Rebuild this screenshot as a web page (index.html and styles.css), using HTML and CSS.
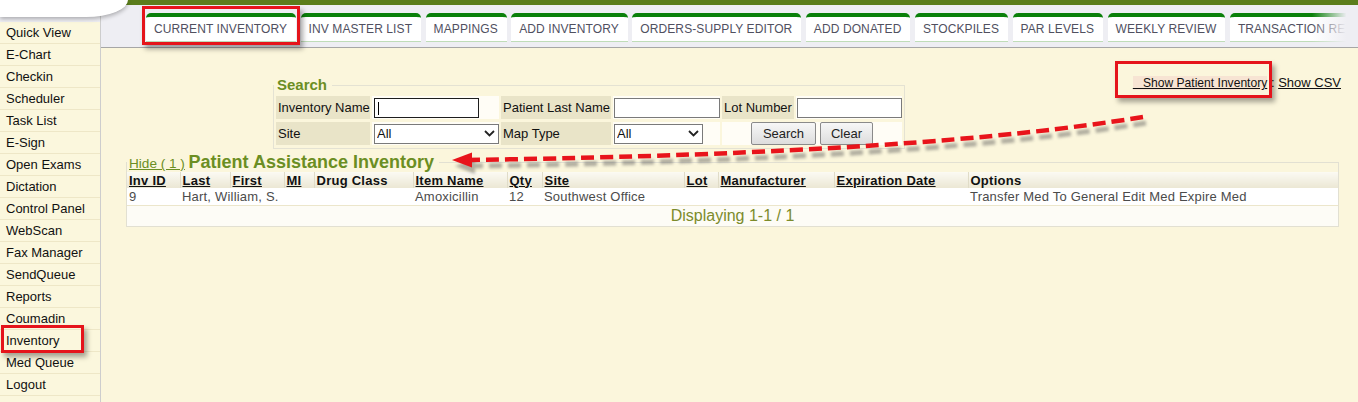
FILE: index.html
```html
<!DOCTYPE html>
<html lang="en">
<head>
<meta charset="utf-8">
<title>Inventory</title>
<link rel="stylesheet" href="styles.css">
</head>
<body>
<div class="page">
  <div class="logo"></div>
  <aside class="sidebar">
    <div class="side-top"></div>
    <nav class="menu">
      <a>Quick View</a>
      <a>E-Chart</a>
      <a>Checkin</a>
      <a>Scheduler</a>
      <a>Task List</a>
      <a>E-Sign</a>
      <a>Open Exams</a>
      <a>Dictation</a>
      <a>Control Panel</a>
      <a>WebScan</a>
      <a>Fax Manager</a>
      <a>SendQueue</a>
      <a>Reports</a>
      <a>Coumadin</a>
      <a>Inventory</a>
      <a>Med Queue</a>
      <a>Logout</a>
      <a>Admin</a>
    </nav>
  </aside>
  <div class="main">
    <header class="topbar">
      <div class="band"></div>
      <nav class="tabs">
        <a class="tab">CURRENT INVENTORY</a>
        <a class="tab">INV MASTER LIST</a>
        <a class="tab">MAPPINGS</a>
        <a class="tab">ADD INVENTORY</a>
        <a class="tab">ORDERS-SUPPLY EDITOR</a>
        <a class="tab">ADD DONATED</a>
        <a class="tab">STOCKPILES</a>
        <a class="tab">PAR LEVELS</a>
        <a class="tab">WEEKLY REVIEW</a>
        <a class="tab">TRANSACTION REPORT</a>
      </nav>
    </header>
    <main class="content">
      <div class="toprow">
        <fieldset class="search">
          <legend>Search</legend>
          <table class="search-table">
            <colgroup>
              <col class="c1"><col class="c2"><col class="c3"><col class="c4"><col class="c5"><col class="c6">
            </colgroup>
            <tr>
              <td class="lbl">Inventory Name</td>
              <td class="fld pad2"><input class="inp inp-focus" type="text"></td>
              <td class="lbl">Patient Last Name</td>
              <td class="fld pad1"><input class="inp inp-wide" type="text"></td>
              <td class="lbl">Lot Number</td>
              <td class="fld pad1"><input class="inp" type="text"></td>
            </tr>
            <tr>
              <td class="lbl">Site</td>
              <td class="fld pad2">
                <span class="sel sel-site">
                  <select><option>All</option></select>
                  <svg viewBox="0 0 11 7"><path d="M1 1 L5.5 5.5 L10 1" fill="none" stroke="#222" stroke-width="1.8"/></svg>
                </span>
              </td>
              <td class="lbl">Map Type</td>
              <td class="fld pad1">
                <span class="sel sel-map">
                  <select><option>All</option></select>
                  <svg viewBox="0 0 11 7"><path d="M1 1 L5.5 5.5 L10 1" fill="none" stroke="#222" stroke-width="1.8"/></svg>
                </span>
              </td>
              <td class="fld" colspan="2">
                <div class="btns">
                  <button class="btn btn-search">Search</button>
                  <button class="btn btn-clear">Clear</button>
                </div>
              </td>
            </tr>
          </table>
        </fieldset>
        <div class="showlinks">
          <a class="show-pi">&nbsp;&nbsp;&nbsp;Show Patient Inventory</a><span class="sep"> : </span><a class="show-csv">Show CSV</a>
        </div>
      </div>

      <fieldset class="section">
        <legend><a class="hide">Hide ( 1 )</a> <span class="title">Patient Assistance Inventory</span></legend>
        <table class="inv">
          <colgroup>
            <col class="w1"><col class="w2"><col class="w3"><col class="w4"><col class="w5"><col class="w6">
            <col class="w7"><col class="w8"><col class="w9"><col class="w10"><col class="w11"><col class="w12">
          </colgroup>
          <thead>
            <tr>
              <th><u>Inv ID</u></th>
              <th><u>Last</u></th>
              <th><u>First</u></th>
              <th><u>MI</u></th>
              <th>Drug Class</th>
              <th><u>Item Name</u></th>
              <th><u>Qty</u></th>
              <th><u>Site</u></th>
              <th><u>Lot</u></th>
              <th><u>Manufacturer</u></th>
              <th><u>Expiration Date</u></th>
              <th>Options</th>
            </tr>
          </thead>
          <tbody>
            <tr class="row">
              <td>9</td>
              <td colspan="2">Hart, William, S.</td>
              <td></td>
              <td></td>
              <td>Amoxicillin</td>
              <td>12</td>
              <td>Southwest Office</td>
              <td></td>
              <td></td>
              <td></td>
              <td>Transfer Med To General Edit Med Expire Med</td>
            </tr>
            <tr class="foot">
              <td colspan="12">Displaying 1-1 / 1</td>
            </tr>
          </tbody>
        </table>
      </fieldset>
    </main>
  </div>

  <div class="mark mark-tab"></div>
  <div class="mark mark-inv"></div>
  <div class="mark mark-show"></div>

  <svg class="arrow" viewBox="0 0 1358 402" width="1358" height="402">
    <defs>
      <filter id="soft" x="-5%" y="-50%" width="110%" height="200%">
        <feGaussianBlur stdDeviation="1.6"/>
      </filter>
    </defs>
    <g filter="url(#soft)" opacity="0.45" transform="translate(3 6)">
      <path d="M1143,117 C1000,140 800,155 470,160" fill="none" stroke="#555" stroke-width="5" stroke-dasharray="13 6"/>
      <path d="M452,160 L472,152 L472,168 Z" fill="#555"/>
    </g>
    <path d="M1143,117 C1000,140 800,155 470,160" fill="none" stroke="#e8141b" stroke-width="4.5" stroke-dasharray="13 6"/>
    <path d="M452,160 L472,152.5 L472,167.5 Z" fill="#e8141b"/>
  </svg>
</div>
</body>
</html>
```

FILE: styles.css
```css
* { box-sizing: border-box; }

html, body {
  margin: 0;
  height: 100%;
}

body {
  font-family: "Liberation Sans", Arial, sans-serif;
  font-size: 13px;
  color: #111;
  background: #fbf6dc;
  overflow: hidden;
}

.page {
  position: relative;
  display: flex;
  width: 1358px;
  height: 402px;
  overflow: hidden;
}

/* logo shape top-left */
.logo {
  position: absolute;
  left: 0;
  top: 0;
  width: 128px;
  height: 17px;
  background: #fff;
  border-bottom-right-radius: 42px 17px;
  box-shadow: 0 2px 4px rgba(0, 0, 0, 0.28);
  z-index: 2;
}

/* sidebar */
.sidebar {
  width: 101px;
  flex: none;
  display: flex;
  flex-direction: column;
  background: #fbf7dd;
  border-right: 1px solid #cdcdcd;
}

.side-top {
  height: 22px;
  flex: none;
  background: #eeeef3;
}

.menu {
  display: flex;
  flex-direction: column;
}

.menu a {
  display: block;
  height: 22px;
  line-height: 22px;
  padding-left: 6px;
  border-bottom: 1px solid #eee7c7;
  color: #111;
  text-decoration: none;
  white-space: nowrap;
}

/* main column */
.main {
  flex: 1;
  display: flex;
  flex-direction: column;
  min-width: 0;
}

.band {
  height: 5px;
  background: #5b7d1b;
}

.tabs {
  position: relative;
  height: 43px;
  display: flex;
  gap: 4.5px;
  padding: 8px 0 0 45px;
  background: #eeeef3;
  border-bottom: 1px solid #a6a6a6;
  overflow: hidden;
}

.tabs::after {
  content: "";
  position: absolute;
  right: 0;
  top: 0;
  bottom: 0;
  width: 46px;
  background: linear-gradient(to right, rgba(238, 238, 243, 0), #eeeef3 75%);
}

.tab {
  flex: none;
  height: 29px;
  padding: 0 9px 0 8px;
  line-height: 24px;
  font-size: 12px;
  letter-spacing: 0.1px;
  color: #50505f;
  background: #fff;
  border-top: 4px solid #0a800a;
  border-bottom: 1px solid #bfdcb8;
  border-radius: 5px 5px 0 0;
  white-space: nowrap;
}

/* content */
.content {
  flex: 1;
  background: #fbf6dc;
  padding: 0 19px 0 25px;
}

.toprow {
  display: flex;
  align-items: flex-start;
  padding-top: 27px;
}

.search {
  margin: 2px 0 0 147px;
  padding: 0;
  border: 1px solid #e4e2d3;
  min-width: 0;
}

.search legend {
  padding: 0 5px 0 3px;
  font-size: 15px;
  line-height: 16px;
  font-weight: bold;
  color: #6b8e23;
}

.search-table {
  border-collapse: separate;
  border-spacing: 2px 3px;
  table-layout: fixed;
  width: 630px;
}

.search-table col.c1 { width: 94px; }
.search-table col.c2 { width: 127px; }
.search-table col.c3 { width: 110px; }
.search-table col.c4 { width: 107px; }
.search-table col.c5 { width: 72px; }
.search-table col.c6 { width: 106px; }

.search-table td {
  height: 23px;
  padding: 0;
  vertical-align: middle;
  white-space: nowrap;
}

.search-table td.lbl {
  background: #e9e4c8;
  padding-left: 2px;
  color: #111;
}

.search-table td.fld {
  background: #fffdf6;
}

.search-table td.pad2 { padding-left: 2px; }
.search-table td.pad1 { padding-left: 1px; }

.inp {
  display: block;
  width: 105px;
  height: 20px;
  margin: 0;
  padding: 0 2px;
  border: 1px solid #7a7a7a;
  border-radius: 0;
  background: #fff;
  font: 13px "Liberation Sans", Arial, sans-serif;
}

.inp-wide { width: 106px; }

.inp-focus {
  border-color: #1e1e1e;
  background: linear-gradient(#000, #000) 3px 3px / 1px 13px no-repeat, #fff;
}

.sel {
  position: relative;
  display: block;
  height: 20px;
}

.sel-site { width: 125px; }
.sel-map { width: 89px; }

.sel select {
  -webkit-appearance: none;
  appearance: none;
  display: block;
  width: 100%;
  height: 20px;
  margin: 0;
  padding: 0 0 0 2px;
  border: 1px solid #7a7a7a;
  border-radius: 0;
  background: #fff;
  color: #111;
  font: 13px "Liberation Sans", Arial, sans-serif;
}

.sel svg {
  position: absolute;
  right: 4px;
  top: 6px;
  width: 11px;
  height: 7px;
  pointer-events: none;
}

.btns {
  display: flex;
  justify-content: center;
  gap: 4px;
}

.btn {
  height: 23px;
  padding: 0;
  border: 1px solid #8a8a8a;
  border-radius: 2px;
  background: linear-gradient(#f7f7f7, #dddddd);
  color: #222;
  font: 13px "Liberation Sans", Arial, sans-serif;
}

.btn-search { width: 65px; }
.btn-clear { width: 53px; }

.showlinks {
  margin-left: auto;
  margin-right: -2px;
  line-height: 16px;
  font-size: 13px;
  white-space: nowrap;
}

.show-pi {
  font-size: 12.1px;
  color: #111;
  text-decoration: underline;
  background: #f7e4d3;
}

.sep {
  color: #111;
}

.show-csv {
  color: #111;
  text-decoration: underline;
}

/* inventory section */
.section {
  margin: 3px 0 0 0;
  padding: 0;
  border: 1px solid #e2e0d2;
  min-width: 0;
}

.section legend {
  height: 20px;
  padding: 0 5px 0 2px;
  line-height: 20px;
  white-space: nowrap;
}

.hide {
  font-size: 13.6px;
  color: #6b8e23;
  text-decoration: underline;
}

.title {
  font-size: 18px;
  font-weight: bold;
  color: #6b8e23;
}

.inv {
  width: 100%;
  border-collapse: collapse;
  table-layout: fixed;
}

.inv col.w1 { width: 53px; }
.inv col.w2 { width: 50px; }
.inv col.w3 { width: 54px; }
.inv col.w4 { width: 30px; }
.inv col.w5 { width: 99px; }
.inv col.w6 { width: 94px; }
.inv col.w7 { width: 35px; }
.inv col.w8 { width: 142px; }
.inv col.w9 { width: 34px; }
.inv col.w10 { width: 116px; }
.inv col.w11 { width: 134px; }
.inv col.w12 { width: auto; }

.inv th {
  height: 16px;
  padding: 0 2px;
  text-align: left;
  font-weight: bold;
  font-size: 13px;
  line-height: 15px;
  letter-spacing: 0.25px;
  color: #111;
  white-space: nowrap;
  overflow: hidden;
  background: linear-gradient(#fbfaf3, #ebe7d4);
  border-left: 1px solid #e0dcc8;
}

.inv th:first-child { border-left: none; }

.inv .row td {
  height: 17px;
  padding: 0 2px;
  line-height: 15px;
  letter-spacing: 0.2px;
  color: #4b4b4b;
  background: #fff;
  white-space: nowrap;
  overflow: hidden;
  border-bottom: 1px solid #ece6cb;
}

.inv .foot td {
  height: 21px;
  padding: 0;
  text-align: center;
  font-size: 16px;
  line-height: 18px;
  color: #7c8b2b;
  background: #fdfcf6;
}

/* annotations */
.mark {
  position: absolute;
  border: 3px solid #e5141b;
  box-shadow: 3px 4px 5px rgba(0, 0, 0, 0.35);
  pointer-events: none;
  z-index: 3;
}

.mark-tab { left: 142px; top: 6px; width: 158px; height: 39px; }
.mark-inv { left: 1px; top: 325px; width: 83px; height: 28px; }
.mark-show { left: 1115px; top: 61px; width: 157px; height: 37px; }

.arrow {
  position: absolute;
  left: 0;
  top: 0;
  pointer-events: none;
  z-index: 4;
}
```
